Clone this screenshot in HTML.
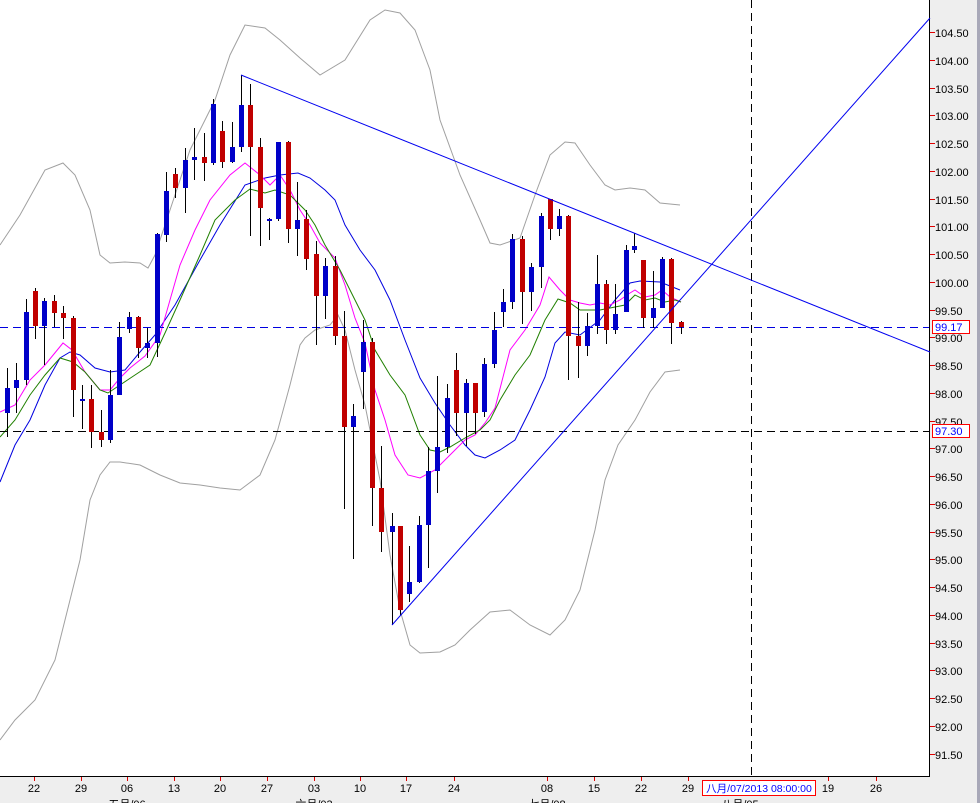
<!DOCTYPE html>
<html><head><meta charset="utf-8"><style>
html,body{margin:0;padding:0;background:#fff;overflow:hidden}
svg{display:block}
text{font-family:"Liberation Sans","Noto Sans CJK SC",sans-serif;font-size:11px}
</style></head><body>
<svg width="980" height="803" viewBox="0 0 980 803" xmlns="http://www.w3.org/2000/svg">
<rect x="0" y="0" width="980" height="803" fill="#fff"/>
<rect x="930" y="0" width="50" height="803" fill="#eeeeee"/>
<rect x="0" y="777" width="980" height="26" fill="#eeeeee"/>
<rect x="977" y="0" width="3" height="803" fill="#a8a8b8"/>
<line x1="929.5" y1="0" x2="929.5" y2="777" stroke="#000" stroke-width="1"/>
<line x1="0" y1="776.5" x2="930" y2="776.5" stroke="#000" stroke-width="1"/>

<!-- bollinger -->
<g fill="none" stroke="#a0a0a0" stroke-width="1">
<polyline points="0,245 20,215 45,170 63,163 75,175 90,210 100,255 110,263 125,262 140,263 148,268 155,255 170,210 190,150 215,100 230,55 245,25 265,28 280,40 300,58 320,75 345,60 370,20 385,10 400,13 415,30 430,70 440,120 460,175 480,220 490,243 500,245 520,238 535,195 550,155 565,142 575,143 590,165 605,185 615,190 630,188 645,190 660,203 680,205"/>
<polyline points="0,740 15,720 35,700 55,660 70,600 80,560 90,500 100,475 110,462 120,462 140,465 160,475 180,483 200,485 220,488 240,490 260,475 275,440 290,385 300,345 305,338 315,330 330,325 338,315 345,330 355,370 365,405 380,480 390,555 400,610 410,645 420,653 440,652 455,645 470,630 490,612 510,610 530,625 550,635 565,620 580,590 595,530 605,480 618,445 635,420 650,392 665,372 680,370"/>
</g>
<!-- MAs -->
<polyline fill="none" stroke="#0000e0" stroke-width="1" points="0,482 15,445 30,420 45,385 60,358 70,352 80,355 95,368 110,372 125,370 140,352 155,335 175,305 200,260 220,225 245,185 265,178 280,175 298,173 310,178 325,190 335,200 345,225 360,250 375,270 390,300 405,340 420,378 435,403 450,425 465,445 475,455 485,458 500,450 515,440 530,410 545,377 555,343 565,332 580,335 600,320 615,300 630,283 640,281 660,282 680,290"/>
<polyline fill="none" stroke="#ff00ff" stroke-width="1" points="0,412 15,405 30,380 45,365 63,343 72,350 85,372 100,390 110,390 120,378 130,368 145,356 160,335 170,300 180,265 195,230 210,200 230,175 245,163 260,175 270,185 280,175 290,190 300,210 310,225 320,243 335,258 345,285 355,318 365,343 375,390 385,420 395,455 408,475 420,478 435,470 450,455 465,440 475,435 485,423 495,408 510,350 525,330 540,305 549,277 560,290 570,300 580,303 590,305 600,303 610,305 620,300 630,293 635,290 645,297 655,295 662,290 670,297 681,302"/>
<polyline fill="none" stroke="#208000" stroke-width="1" points="0,437 15,420 30,395 45,375 60,358 73,362 85,372 100,390 108,393 120,385 135,375 150,365 165,333 180,300 200,255 215,220 235,200 250,189 265,193 275,190 290,195 305,210 315,225 325,245 340,270 355,300 365,320 375,350 390,375 405,395 420,435 430,450 440,452 450,447 465,438 480,430 490,420 500,400 515,375 530,355 545,320 558,299 570,303 580,310 600,310 610,308 625,305 635,295 645,300 655,298 665,302 675,300 681,302"/>

<!-- dashed lines -->
<line x1="0" y1="327.5" x2="929" y2="327.5" stroke="#0000e0" stroke-dasharray="8,5"/>
<line x1="0" y1="431.5" x2="929" y2="431.5" stroke="#000" stroke-dasharray="8,5"/>
<line x1="751.5" y1="0" x2="751.5" y2="776" stroke="#000" stroke-dasharray="8,5"/>

<!-- candles -->
<g stroke="#000" stroke-width="1">
<line x1="7.5" y1="368" x2="7.5" y2="437"/><line x1="16.5" y1="363" x2="16.5" y2="413"/><line x1="26.5" y1="299" x2="26.5" y2="385"/><line x1="35.5" y1="288" x2="35.5" y2="339"/><line x1="44.5" y1="298" x2="44.5" y2="365"/><line x1="54.5" y1="295" x2="54.5" y2="327"/><line x1="63.5" y1="306" x2="63.5" y2="339"/><line x1="73.5" y1="316" x2="73.5" y2="417"/><line x1="82.5" y1="385" x2="82.5" y2="429"/><line x1="91.5" y1="385" x2="91.5" y2="448"/><line x1="101.5" y1="410" x2="101.5" y2="447"/><line x1="110.5" y1="370" x2="110.5" y2="443"/><line x1="119.5" y1="322" x2="119.5" y2="395"/><line x1="129.5" y1="312" x2="129.5" y2="333"/><line x1="138.5" y1="316" x2="138.5" y2="358"/><line x1="147.5" y1="328" x2="147.5" y2="358"/><line x1="157.5" y1="233" x2="157.5" y2="357"/><line x1="166.5" y1="172" x2="166.5" y2="242"/><line x1="175.5" y1="168" x2="175.5" y2="198"/><line x1="185.5" y1="148" x2="185.5" y2="213"/><line x1="194.5" y1="128" x2="194.5" y2="180"/><line x1="204.5" y1="133" x2="204.5" y2="181"/><line x1="213.5" y1="99" x2="213.5" y2="165"/><line x1="222.5" y1="121" x2="222.5" y2="168"/><line x1="232.5" y1="122" x2="232.5" y2="163"/><line x1="241.5" y1="75" x2="241.5" y2="152"/><line x1="250.5" y1="84" x2="250.5" y2="236"/><line x1="260.5" y1="138" x2="260.5" y2="246"/><line x1="269.5" y1="218" x2="269.5" y2="240"/><line x1="278.5" y1="142" x2="278.5" y2="221"/><line x1="288.5" y1="141" x2="288.5" y2="243"/><line x1="297.5" y1="182" x2="297.5" y2="256"/><line x1="306.5" y1="210" x2="306.5" y2="270"/><line x1="316.5" y1="241" x2="316.5" y2="345"/><line x1="325.5" y1="258" x2="325.5" y2="319"/><line x1="335.5" y1="256" x2="335.5" y2="345"/><line x1="344.5" y1="311" x2="344.5" y2="509"/><line x1="353.5" y1="404" x2="353.5" y2="559"/><line x1="363.5" y1="320" x2="363.5" y2="409"/><line x1="372.5" y1="338" x2="372.5" y2="526"/><line x1="381.5" y1="446" x2="381.5" y2="552"/><line x1="392.5" y1="513" x2="392.5" y2="625"/><line x1="400.5" y1="526" x2="400.5" y2="615"/><line x1="409.5" y1="546" x2="409.5" y2="602"/><line x1="419.5" y1="516" x2="419.5" y2="583"/><line x1="428.5" y1="447" x2="428.5" y2="568"/><line x1="437.5" y1="376" x2="437.5" y2="493"/><line x1="447.5" y1="384" x2="447.5" y2="453"/><line x1="456.5" y1="353" x2="456.5" y2="436"/><line x1="466.5" y1="379" x2="466.5" y2="446"/><line x1="475.5" y1="383" x2="475.5" y2="434"/><line x1="484.5" y1="358" x2="484.5" y2="417"/><line x1="494.5" y1="312" x2="494.5" y2="368"/><line x1="503.5" y1="289" x2="503.5" y2="327"/><line x1="512.5" y1="234" x2="512.5" y2="309"/><line x1="522.5" y1="236" x2="522.5" y2="324"/><line x1="531.5" y1="263" x2="531.5" y2="311"/><line x1="541.5" y1="213" x2="541.5" y2="288"/><line x1="550.5" y1="199" x2="550.5" y2="240"/><line x1="559.5" y1="209" x2="559.5" y2="236"/><line x1="568.5" y1="215" x2="568.5" y2="380"/><line x1="578.5" y1="302" x2="578.5" y2="378"/><line x1="587.5" y1="313" x2="587.5" y2="356"/><line x1="597.5" y1="255" x2="597.5" y2="334"/><line x1="606.5" y1="280" x2="606.5" y2="344"/><line x1="615.5" y1="284" x2="615.5" y2="334"/><line x1="626.5" y1="245" x2="626.5" y2="312"/><line x1="634.5" y1="233" x2="634.5" y2="253"/><line x1="643.5" y1="260" x2="643.5" y2="328"/><line x1="653.5" y1="271" x2="653.5" y2="328"/><line x1="662.5" y1="257" x2="662.5" y2="308"/><line x1="671.5" y1="258" x2="671.5" y2="344"/><line x1="681.5" y1="321" x2="681.5" y2="334"/>
</g>
<g fill="#0000c8">
<rect x="5" y="388" width="5" height="25"/><rect x="14" y="380" width="5" height="8"/><rect x="24" y="312" width="5" height="68"/><rect x="42" y="301" width="5" height="25"/><rect x="80" y="399" width="5" height="2"/><rect x="108" y="395" width="5" height="45"/><rect x="117" y="337" width="5" height="58"/><rect x="127" y="317" width="5" height="12"/><rect x="145" y="343" width="5" height="5"/><rect x="155" y="234" width="5" height="109"/><rect x="164" y="191" width="5" height="44"/><rect x="183" y="160" width="5" height="28"/><rect x="192" y="157" width="5" height="3"/><rect x="211" y="104" width="5" height="59"/><rect x="230" y="147" width="5" height="15"/><rect x="239" y="105" width="5" height="42"/><rect x="267" y="219" width="5" height="2"/><rect x="276" y="142" width="5" height="77"/><rect x="295" y="220" width="5" height="9"/><rect x="323" y="266" width="5" height="30"/><rect x="351" y="416" width="5" height="11"/><rect x="361" y="342" width="5" height="30"/><rect x="390" y="526" width="5" height="6"/><rect x="407" y="582" width="5" height="12"/><rect x="417" y="525" width="5" height="57"/><rect x="426" y="471" width="5" height="54"/><rect x="435" y="447" width="5" height="24"/><rect x="445" y="398" width="5" height="49"/><rect x="464" y="383" width="5" height="30"/><rect x="482" y="364" width="5" height="48"/><rect x="492" y="330" width="5" height="34"/><rect x="501" y="302" width="5" height="10"/><rect x="510" y="239" width="5" height="63"/><rect x="529" y="267" width="5" height="25"/><rect x="539" y="216" width="5" height="51"/><rect x="557" y="216" width="5" height="13"/><rect x="585" y="326" width="5" height="20"/><rect x="595" y="284" width="5" height="42"/><rect x="613" y="314" width="5" height="16"/><rect x="624" y="250" width="5" height="62"/><rect x="632" y="246" width="5" height="4"/><rect x="651" y="308" width="5" height="10"/><rect x="660" y="259" width="5" height="49"/>
</g>
<g fill="#c00000">
<rect x="33" y="291" width="5" height="35"/><rect x="52" y="301" width="5" height="12"/><rect x="61" y="313" width="5" height="5"/><rect x="71" y="318" width="5" height="72"/><rect x="89" y="399" width="5" height="33"/><rect x="99" y="432" width="5" height="8"/><rect x="136" y="317" width="5" height="31"/><rect x="173" y="174" width="5" height="14"/><rect x="202" y="157" width="5" height="6"/><rect x="220" y="131" width="5" height="31"/><rect x="248" y="105" width="5" height="42"/><rect x="258" y="147" width="5" height="61"/><rect x="286" y="142" width="5" height="87"/><rect x="304" y="219" width="5" height="40"/><rect x="314" y="254" width="5" height="42"/><rect x="333" y="266" width="5" height="70"/><rect x="342" y="336" width="5" height="91"/><rect x="370" y="342" width="5" height="146"/><rect x="379" y="488" width="5" height="44"/><rect x="398" y="526" width="5" height="84"/><rect x="454" y="370" width="5" height="43"/><rect x="473" y="383" width="5" height="30"/><rect x="520" y="239" width="5" height="53"/><rect x="548" y="199" width="5" height="30"/><rect x="566" y="216" width="5" height="120"/><rect x="576" y="336" width="5" height="10"/><rect x="604" y="284" width="5" height="46"/><rect x="641" y="260" width="5" height="58"/><rect x="669" y="259" width="5" height="64"/><rect x="679" y="322" width="5" height="5"/>
</g>

<!-- trend lines -->
<line x1="241" y1="75" x2="930" y2="352" stroke="#0000f0" stroke-width="1"/>
<line x1="392" y1="625" x2="930" y2="18" stroke="#0000f0" stroke-width="1"/>

<!-- y axis labels -->
<g stroke="#e00000" stroke-width="1">
<line x1="930" y1="32.5" x2="935" y2="32.5"/><line x1="930" y1="60.5" x2="935" y2="60.5"/><line x1="930" y1="88.5" x2="935" y2="88.5"/><line x1="930" y1="115.5" x2="935" y2="115.5"/><line x1="930" y1="143.5" x2="935" y2="143.5"/><line x1="930" y1="171.5" x2="935" y2="171.5"/><line x1="930" y1="199.5" x2="935" y2="199.5"/><line x1="930" y1="226.5" x2="935" y2="226.5"/><line x1="930" y1="254.5" x2="935" y2="254.5"/><line x1="930" y1="282.5" x2="935" y2="282.5"/><line x1="930" y1="310.5" x2="935" y2="310.5"/><line x1="930" y1="337.5" x2="935" y2="337.5"/><line x1="930" y1="365.5" x2="935" y2="365.5"/><line x1="930" y1="393.5" x2="935" y2="393.5"/><line x1="930" y1="421.5" x2="935" y2="421.5"/><line x1="930" y1="448.5" x2="935" y2="448.5"/><line x1="930" y1="476.5" x2="935" y2="476.5"/><line x1="930" y1="504.5" x2="935" y2="504.5"/><line x1="930" y1="532.5" x2="935" y2="532.5"/><line x1="930" y1="559.5" x2="935" y2="559.5"/><line x1="930" y1="587.5" x2="935" y2="587.5"/><line x1="930" y1="615.5" x2="935" y2="615.5"/><line x1="930" y1="643.5" x2="935" y2="643.5"/><line x1="930" y1="670.5" x2="935" y2="670.5"/><line x1="930" y1="698.5" x2="935" y2="698.5"/><line x1="930" y1="726.5" x2="935" y2="726.5"/><line x1="930" y1="754.5" x2="935" y2="754.5"/>
</g>
<g fill="#000">
<text x="935" y="37">104.50</text><text x="935" y="65">104.00</text><text x="935" y="93">103.50</text><text x="935" y="120">103.00</text><text x="935" y="148">102.50</text><text x="935" y="176">102.00</text><text x="935" y="204">101.50</text><text x="935" y="231">101.00</text><text x="935" y="259">100.50</text><text x="935" y="287">100.00</text><text x="935" y="315">99.50</text><text x="935" y="342">99.00</text><text x="935" y="370">98.50</text><text x="935" y="398">98.00</text><text x="935" y="426">97.50</text><text x="935" y="453">97.00</text><text x="935" y="481">96.50</text><text x="935" y="509">96.00</text><text x="935" y="537">95.50</text><text x="935" y="564">95.00</text><text x="935" y="592">94.50</text><text x="935" y="620">94.00</text><text x="935" y="648">93.50</text><text x="935" y="675">93.00</text><text x="935" y="703">92.50</text><text x="935" y="731">92.00</text><text x="935" y="759">91.50</text>
</g>
<rect x="932.5" y="320.5" width="37" height="13" fill="#fff" stroke="#ff0000"/>
<text x="935" y="331" fill="#0000ff">99.17</text>
<rect x="932.5" y="424.5" width="37" height="13" fill="#fff" stroke="#ff0000"/>
<text x="935" y="435" fill="#0000ff">97.30</text>

<!-- x axis -->
<g stroke="#e00000" stroke-width="1">
<line x1="34.5" y1="777" x2="34.5" y2="781"/><line x1="81.5" y1="777" x2="81.5" y2="781"/><line x1="127.5" y1="777" x2="127.5" y2="781"/><line x1="174.5" y1="777" x2="174.5" y2="781"/><line x1="220.5" y1="777" x2="220.5" y2="781"/><line x1="267.5" y1="777" x2="267.5" y2="781"/><line x1="314.5" y1="777" x2="314.5" y2="781"/><line x1="360.5" y1="777" x2="360.5" y2="781"/><line x1="406.5" y1="777" x2="406.5" y2="781"/><line x1="454.5" y1="777" x2="454.5" y2="781"/><line x1="547.5" y1="777" x2="547.5" y2="781"/><line x1="594.5" y1="777" x2="594.5" y2="781"/><line x1="641.5" y1="777" x2="641.5" y2="781"/><line x1="688.5" y1="777" x2="688.5" y2="781"/><line x1="828.5" y1="777" x2="828.5" y2="781"/><line x1="876.5" y1="777" x2="876.5" y2="781"/>
</g>
<g fill="#000" text-anchor="middle">
<text x="34" y="792">22</text><text x="81" y="792">29</text><text x="127" y="792">06</text><text x="174" y="792">13</text><text x="220" y="792">20</text><text x="267" y="792">27</text><text x="314" y="792">03</text><text x="360" y="792">10</text><text x="406" y="792">17</text><text x="454" y="792">24</text><text x="547" y="792">08</text><text x="594" y="792">15</text><text x="641" y="792">22</text><text x="688" y="792">29</text><text x="828" y="792">19</text><text x="876" y="792">26</text>
<text x="127" y="808">五月/06</text><text x="314" y="808">六月/03</text><text x="547" y="808">七月/08</text><text x="740" y="808">八月/05</text>
</g>
<rect x="702.5" y="780.5" width="113" height="15" fill="#fff" stroke="#ff0000"/>
<text x="759" y="792" fill="#0000ff" text-anchor="middle" style="font-size:10.5px">八月/07/2013 08:00:00</text>
</svg>
</body></html>
